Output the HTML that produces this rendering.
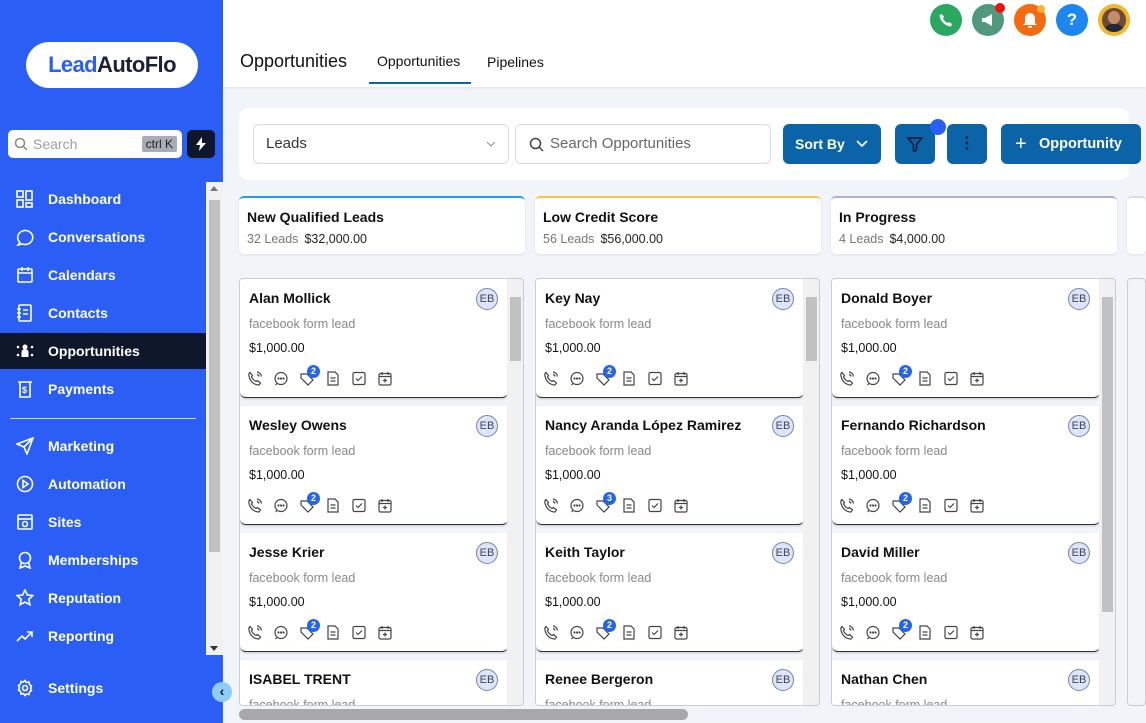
<!DOCTYPE html><html><head><style>
*{box-sizing:border-box;margin:0;padding:0}
html,body{width:1146px;height:723px;overflow:hidden}
body{font-family:"Liberation Sans",sans-serif;background:#f1f5f9;position:relative}
.sb{position:absolute;left:0;top:0;width:223px;height:723px;background:#2a5ef4}
.logo{position:absolute;left:26px;top:42px;width:172px;height:46px;background:#fff;border-radius:23px;text-align:center;line-height:46px;font-weight:bold;font-size:22px;letter-spacing:-0.6px}
.srch{position:absolute;left:8px;top:130px;width:174px;height:28px;background:#fff;border-radius:5px;color:#9aa0a8;font-size:14px;line-height:28px;padding-left:25px}
.kbd{position:absolute;right:5px;top:6px;background:#a8adb5;color:#222;font-size:12px;line-height:16px;padding:0 4px;border-radius:2px}
.bolt{position:absolute;left:187px;top:130px;width:28px;height:28px;background:#0f172a;border-radius:5px}
.mi{position:absolute;left:0;width:206px;height:36px;color:#fff;font-weight:bold;font-size:14px;line-height:36px;padding-left:48px}
.mi svg{position:absolute;left:16px;top:9px}
.act{background:#0f172a}
.vs{position:absolute;left:206px;top:182px;width:17px;height:473px;background:#f1f1f1}
.hdr{position:absolute;left:223px;top:0;width:923px;height:87px;background:#fff;box-shadow:0 1px 3px rgba(0,0,0,.08)}
.ic{position:absolute;top:4px;width:32px;height:32px;border-radius:50%}
.tb{position:absolute;left:239px;top:108px;width:890px;height:72px;background:#fff;border-radius:10px}
.inp{position:absolute;top:124px;height:40px;background:#fff;border:1px solid #d6dbe1;border-radius:6px;font-size:15px;color:#333;line-height:38px}
.btn{position:absolute;top:124px;height:40px;background:#0b63a8;border-radius:6px;color:#fff;font-weight:bold;font-size:14px;line-height:40px}
.ch{position:absolute;top:196px;width:286px;height:58px;background:#fff;border-radius:5px;border-top:2px solid;box-shadow:0 1px 2px rgba(0,0,0,.08)}
.ch b{position:absolute;left:8px;top:11px;font-size:14px;color:#111}
.ch span{position:absolute;left:8px;top:34px;font-size:12.5px;color:#777}
.ch span i{font-style:normal;color:#222;margin-left:6px}
.col{position:absolute;top:278px;width:285px;height:428px;border:1px solid #c9ccd1;border-radius:4px;background:#f1f5f9;overflow:hidden}
.csb{position:absolute;right:0;top:0;width:16px;height:100%;background:#f1f1f1}
.thumb{position:absolute;left:3px;top:18px;width:11px;height:64px;background:#c1c1c1}
.card{position:absolute;left:0;width:268px;height:119px;background:#fff;border-radius:0 0 6px 6px;border-bottom:1px solid #333;box-shadow:0 1px 2px rgba(0,0,0,.2)}
.card b{position:absolute;left:9px;top:11px;font-size:14px;color:#111}
.card .s{position:absolute;left:9px;top:38px;font-size:12.5px;color:#888}
.card .p{position:absolute;left:9px;top:62px;font-size:12.5px;color:#111}
.eb{position:absolute;right:10px;top:9px;width:22px;height:22px;border-radius:50%;background:#dbe5fb;border:1px solid #7b8597;font-size:11px;color:#445;text-align:center;line-height:20px}
.icons{position:absolute;left:8px;top:92px}
.bdg{position:absolute;left:67px;top:86px;width:13px;height:13px;border-radius:50%;background:#2563eb;color:#fff;font-size:9px;font-weight:bold;text-align:center;line-height:13px}
</style></head><body>
<div class="sb">
<div class="logo"><span style="color:#2a5ef4">Lead</span><span style="color:#1a2238">AutoFlo</span></div>
<div class="srch"><svg style="position:absolute;left:6px;top:7px" width="14" height="14" viewBox="0 0 14 14" fill="none" stroke="#888" stroke-width="1.5"><circle cx="6" cy="6" r="4.5"/><path d="M9.5 9.5L13 13"/></svg>Search<span class="kbd">ctrl K</span></div>
<div class="bolt"><svg style="position:absolute;left:8px;top:7px" width="12" height="14" viewBox="0 0 12 14"><path d="M7 0L1 8h4l-1 6 7-8H7z" fill="#fff"/></svg></div>
<div class="mi" style="top:181px"><svg width="18" height="18" fill="none" stroke="#fff" stroke-width="1.6"><rect x="1" y="1" width="6" height="6"/><rect x="10" y="1" width="6" height="9"/><rect x="1" y="10" width="6" height="7"/><rect x="10" y="13" width="6" height="4"/></svg>Dashboard</div>
<div class="mi" style="top:219px"><svg width="18" height="18" fill="none" stroke="#fff" stroke-width="1.6"><path d="M4 14.5A7.5 7 0 1 1 6.5 16L2 17z"/></svg>Conversations</div>
<div class="mi" style="top:257px"><svg width="18" height="18" fill="none" stroke="#fff" stroke-width="1.6"><rect x="2" y="3" width="14" height="13" rx="1"/><path d="M2 7h14M6 1v4M12 1v4"/></svg>Calendars</div>
<div class="mi" style="top:295px"><svg width="18" height="18" fill="none" stroke="#fff" stroke-width="1.6"><rect x="3" y="1" width="12" height="16" rx="1"/><path d="M1 5h4M1 9h4M1 13h4M7 6h5M7 10h5"/></svg>Contacts</div>
<div class="mi act" style="top:333px"><svg width="18" height="18" fill="#fff"><circle cx="9" cy="5" r="2.5"/><path d="M5.5 15v-5a3.5 3 0 0 1 7 0v5z"/><circle cx="2" cy="5" r="1.3"/><circle cx="16" cy="5" r="1.3"/><circle cx="2" cy="13" r="1.3"/><circle cx="16" cy="13" r="1.3"/></svg>Opportunities</div>
<div class="mi" style="top:371px"><svg width="18" height="18" fill="none" stroke="#fff" stroke-width="1.6"><path d="M2 2h14M4 2v15h10V2"/><text x="6" y="13" font-size="9" fill="#fff" stroke="none">$</text></svg>Payments</div>
<div style="position:absolute;left:10px;top:418px;width:186px;height:1px;background:#cfd9fb"></div>
<div class="mi" style="top:428px"><svg width="18" height="18" fill="none" stroke="#fff" stroke-width="1.6"><path d="M17 1L1 7l7 3 3 7z M8 10l9-9"/></svg>Marketing</div>
<div class="mi" style="top:466px"><svg width="18" height="18" fill="none" stroke="#fff" stroke-width="1.6"><circle cx="9" cy="9" r="7.5"/><path d="M7 5.5v7l5-3.5z"/></svg>Automation</div>
<div class="mi" style="top:504px"><svg width="18" height="18" fill="none" stroke="#fff" stroke-width="1.6"><rect x="2" y="2" width="14" height="14" rx="1"/><path d="M2 6h14"/><circle cx="9" cy="11" r="2.5"/></svg>Sites</div>
<div class="mi" style="top:542px"><svg width="18" height="18" fill="none" stroke="#fff" stroke-width="1.6"><circle cx="9" cy="7" r="5.5"/><path d="M5.5 11l-1.5 6 5-2 5 2-1.5-6"/></svg>Memberships</div>
<div class="mi" style="top:580px"><svg width="18" height="18" fill="none" stroke="#fff" stroke-width="1.6"><path d="M9 1l2.4 5 5.4.6-4 3.7 1.1 5.4L9 13l-4.9 2.7 1.1-5.4-4-3.7 5.4-.6z"/></svg>Reputation</div>
<div class="mi" style="top:618px"><svg width="18" height="18" fill="none" stroke="#fff" stroke-width="1.6"><path d="M1 14l5-5 3 3 7-7M11 5h5v5"/></svg>Reporting</div>
<div class="mi" style="top:670px"><svg width="18" height="18" fill="none" stroke="#fff" stroke-width="1.6"><circle cx="9" cy="9" r="2.5"/><path d="M9 1.5l1.5 2 2.5-.5.5 2.5 2 1.5-1 2.3 1 2.2-2 1.5-.5 2.5-2.5-.5L9 16.5l-1.5-2-2.5.5-.5-2.5-2-1.5 1-2.2-1-2.3 2-1.5.5-2.5 2.5.5z"/></svg>Settings</div>
<div class="vs"><div style="position:absolute;left:3px;top:18px;width:11px;height:352px;background:#c1c1c1"></div><div style="position:absolute;left:4px;top:4px;border:4px solid transparent;border-bottom:5px solid #777;border-top:0"></div><div style="position:absolute;left:4px;bottom:4px;border:4px solid transparent;border-top:5px solid #333;border-bottom:0"></div></div>
<div style="position:absolute;left:212px;top:682px;width:20px;height:20px;border-radius:50%;background:#8ecdf5;color:#0f172a;font-weight:bold;font-size:14px;text-align:center;line-height:19px">‹</div>
</div>
<div class="hdr">
<div style="position:absolute;left:17px;top:51px;font-size:18px;color:#111">Opportunities</div>
<div style="position:absolute;left:154px;top:53px;font-size:14px;color:#111">Opportunities</div>
<div style="position:absolute;left:146px;top:82px;width:102px;height:2px;background:#0b63a8"></div>
<div style="position:absolute;left:264px;top:54px;font-size:14px;color:#111">Pipelines</div>
<div class="ic" style="left:707px;background:#2aa860"><svg style="margin:9px" width="14" height="14" viewBox="0 0 14 14"><path d="M3 1l2 3-1 1.5c1 2 2.5 3.5 4.5 4.5L10 9l3 2-1 2.5C6 13 1 8 .5 2z" fill="#fff"/></svg></div>
<div class="ic" style="left:749px;background:#4f9a7c"><svg style="margin:9px" width="14" height="14"><path d="M1 5h3l7-4v12L4 9H1z M4 9l1 4" fill="#fff"/></svg><div style="position:absolute;right:-1px;top:-1px;width:10px;height:10px;border-radius:50%;background:#e11"></div></div>
<div class="ic" style="left:791px;background:#f56a10"><svg style="margin:8px" width="16" height="16"><path d="M8 1a5 5 0 0 0-5 5v5l-2 2h14l-2-2V6a5 5 0 0 0-5-5zM6 14a2 2 0 0 0 4 0" fill="#fff"/></svg><div style="position:absolute;right:1px;top:1px;width:8px;height:8px;border-radius:50%;background:#f9b233"></div></div>
<div class="ic" style="left:833px;background:#1d86f0;color:#fff;font-weight:bold;font-size:17px;text-align:center;line-height:32px">?</div>
<div class="ic" style="left:875px;background:#f2b72a"><div style="margin:4px;width:24px;height:24px;border-radius:50%;background:#6b4a3a;position:relative;overflow:hidden"><div style="position:absolute;left:6px;top:3px;width:12px;height:13px;border-radius:50%;background:#c48e6a"></div><div style="position:absolute;left:2px;top:16px;width:20px;height:10px;background:#1f2a3a;border-radius:8px 8px 0 0"></div></div></div>
</div>
<div class="tb"></div>
<div class="inp" style="left:253px;width:256px;padding-left:12px">Leads<svg style="position:absolute;right:12px;top:15px" width="10" height="8"><path d="M1 2l4 4 4-4" fill="none" stroke="#999" stroke-width="1.2"/></svg></div>
<div class="inp" style="left:515px;width:256px;padding-left:34px;color:#666">Search Opportunities<svg style="position:absolute;left:13px;top:12px" width="15" height="15" fill="none" stroke="#444" stroke-width="1.5"><circle cx="6.5" cy="6.5" r="5"/><path d="M10 10l4 4"/></svg></div>
<div class="btn" style="left:783px;width:98px;padding-left:12px">Sort By<svg style="position:absolute;right:13px;top:16px" width="12" height="8"><path d="M1 1l5 5 5-5" fill="none" stroke="#fff" stroke-width="1.6"/></svg></div>
<div class="btn" style="left:895px;width:40px"><svg style="margin:13px 0 0 12px;display:block" width="16" height="15" viewBox="0 0 16 15"><path d="M1 1h14l-5.5 6.5V13l-3 1.5v-7z" fill="none" stroke="#0f172a" stroke-width="1.5"/></svg></div>
<div style="position:absolute;left:930px;top:119px;width:16px;height:16px;border-radius:50%;background:#2a5ef4"></div>
<div class="btn" style="left:947px;width:40px;text-align:center;color:#0f172a;font-size:16px">⋮</div>
<div class="btn" style="left:1001px;width:140px;padding-left:38px;font-size:14.5px"><span style="position:absolute;left:14px;font-size:20px;font-weight:normal">+</span>Opportunity</div>

<div class="ch" style="left:239px;border-top-color:#1e9ef0"><b>New Qualified Leads</b><span>32 Leads<i>$32,000.00</i></span></div>
<div class="ch" style="left:535px;border-top-color:#f6c544"><b>Low Credit Score</b><span>56 Leads<i>$56,000.00</i></span></div>
<div class="ch" style="left:831px;border-top-color:#b0b0d8"><b>In Progress</b><span>4 Leads<i>$4,000.00</i></span></div>
<div class="ch" style="left:1127px;border-top-color:#ddd;width:19px"></div>

<svg width="0" height="0" style="position:absolute"><defs><g id="ir" fill="none" stroke="#444" stroke-width="1.2">
<path d="M2 1.5l2.5 3-1 1.5c1 2 2.5 3.5 4.5 4.5l1.5-1 3 2.5-1.5 2C5 14 1 9 .8 3zM9 1a5 5 0 0 1 4.5 4.5M9 3.5a2.5 2.5 0 0 1 2 2"/>
<g transform="translate(26,0)"><circle cx="7" cy="7.5" r="6"/><path d="M3 12.5l-1.5 1.5"/><circle cx="4.5" cy="7.5" r=".5"/><circle cx="7" cy="7.5" r=".5"/><circle cx="9.5" cy="7.5" r=".5"/></g>
<g transform="translate(52,0)"><path d="M1 3h6l6 6-5 5-7-7zM13 5l-1-2"/></g>
<g transform="translate(78,0)"><path d="M2 1h7l3 3v10H2zM4.5 7h5M4.5 10h5"/></g>
<g transform="translate(104,0)"><rect x="1" y="1.5" width="12" height="12" rx="1.5"/><path d="M4 7.5l2 2 4-4"/></g>
<g transform="translate(130,0)"><rect x="1" y="2.5" width="12" height="11.5" rx="1.5"/><path d="M1 5.5h12M4 1v3M10 1v3M7 7.5v4M5 9.5h4"/></g>
</g></defs></svg>

<div class="col" style="left:239px">
<div class="card" style="top:0"><b>Alan Mollick</b><div class="s">facebook form lead</div><div class="p">$1,000.00</div><div class="eb">EB</div><svg class="icons" width="150" height="16"><use href="#ir"/></svg><div class="bdg">2</div></div>
<div class="card" style="top:127px"><b>Wesley Owens</b><div class="s">facebook form lead</div><div class="p">$1,000.00</div><div class="eb">EB</div><svg class="icons" width="150" height="16"><use href="#ir"/></svg><div class="bdg">2</div></div>
<div class="card" style="top:254px"><b>Jesse Krier</b><div class="s">facebook form lead</div><div class="p">$1,000.00</div><div class="eb">EB</div><svg class="icons" width="150" height="16"><use href="#ir"/></svg><div class="bdg">2</div></div>
<div class="card" style="top:381px"><b>ISABEL TRENT</b><div class="s">facebook form lead</div><div class="eb">EB</div></div>
<div class="csb"><div class="thumb"></div></div>
</div>
<div class="col" style="left:535px">
<div class="card" style="top:0"><b>Key Nay</b><div class="s">facebook form lead</div><div class="p">$1,000.00</div><div class="eb">EB</div><svg class="icons" width="150" height="16"><use href="#ir"/></svg><div class="bdg">2</div></div>
<div class="card" style="top:127px"><b>Nancy Aranda López Ramirez</b><div class="s">facebook form lead</div><div class="p">$1,000.00</div><div class="eb">EB</div><svg class="icons" width="150" height="16"><use href="#ir"/></svg><div class="bdg">3</div></div>
<div class="card" style="top:254px"><b>Keith Taylor</b><div class="s">facebook form lead</div><div class="p">$1,000.00</div><div class="eb">EB</div><svg class="icons" width="150" height="16"><use href="#ir"/></svg><div class="bdg">2</div></div>
<div class="card" style="top:381px"><b>Renee Bergeron</b><div class="s">facebook form lead</div><div class="eb">EB</div></div>
<div class="csb"><div class="thumb"></div></div>
</div>
<div class="col" style="left:831px">
<div class="card" style="top:0"><b>Donald Boyer</b><div class="s">facebook form lead</div><div class="p">$1,000.00</div><div class="eb">EB</div><svg class="icons" width="150" height="16"><use href="#ir"/></svg><div class="bdg">2</div></div>
<div class="card" style="top:127px"><b>Fernando Richardson</b><div class="s">facebook form lead</div><div class="p">$1,000.00</div><div class="eb">EB</div><svg class="icons" width="150" height="16"><use href="#ir"/></svg><div class="bdg">2</div></div>
<div class="card" style="top:254px"><b>David Miller</b><div class="s">facebook form lead</div><div class="p">$1,000.00</div><div class="eb">EB</div><svg class="icons" width="150" height="16"><use href="#ir"/></svg><div class="bdg">2</div></div>
<div class="card" style="top:381px"><b>Nathan Chen</b><div class="s">facebook form lead</div><div class="eb">EB</div></div>
<div class="csb"><div class="thumb" style="height:315px"></div></div>
</div>
<div class="col" style="left:1127px;width:19px;height:428px"></div>
<div style="position:absolute;left:239px;top:709px;width:449px;height:11px;border-radius:6px;background:#a8a8a8"></div>
</body></html>
